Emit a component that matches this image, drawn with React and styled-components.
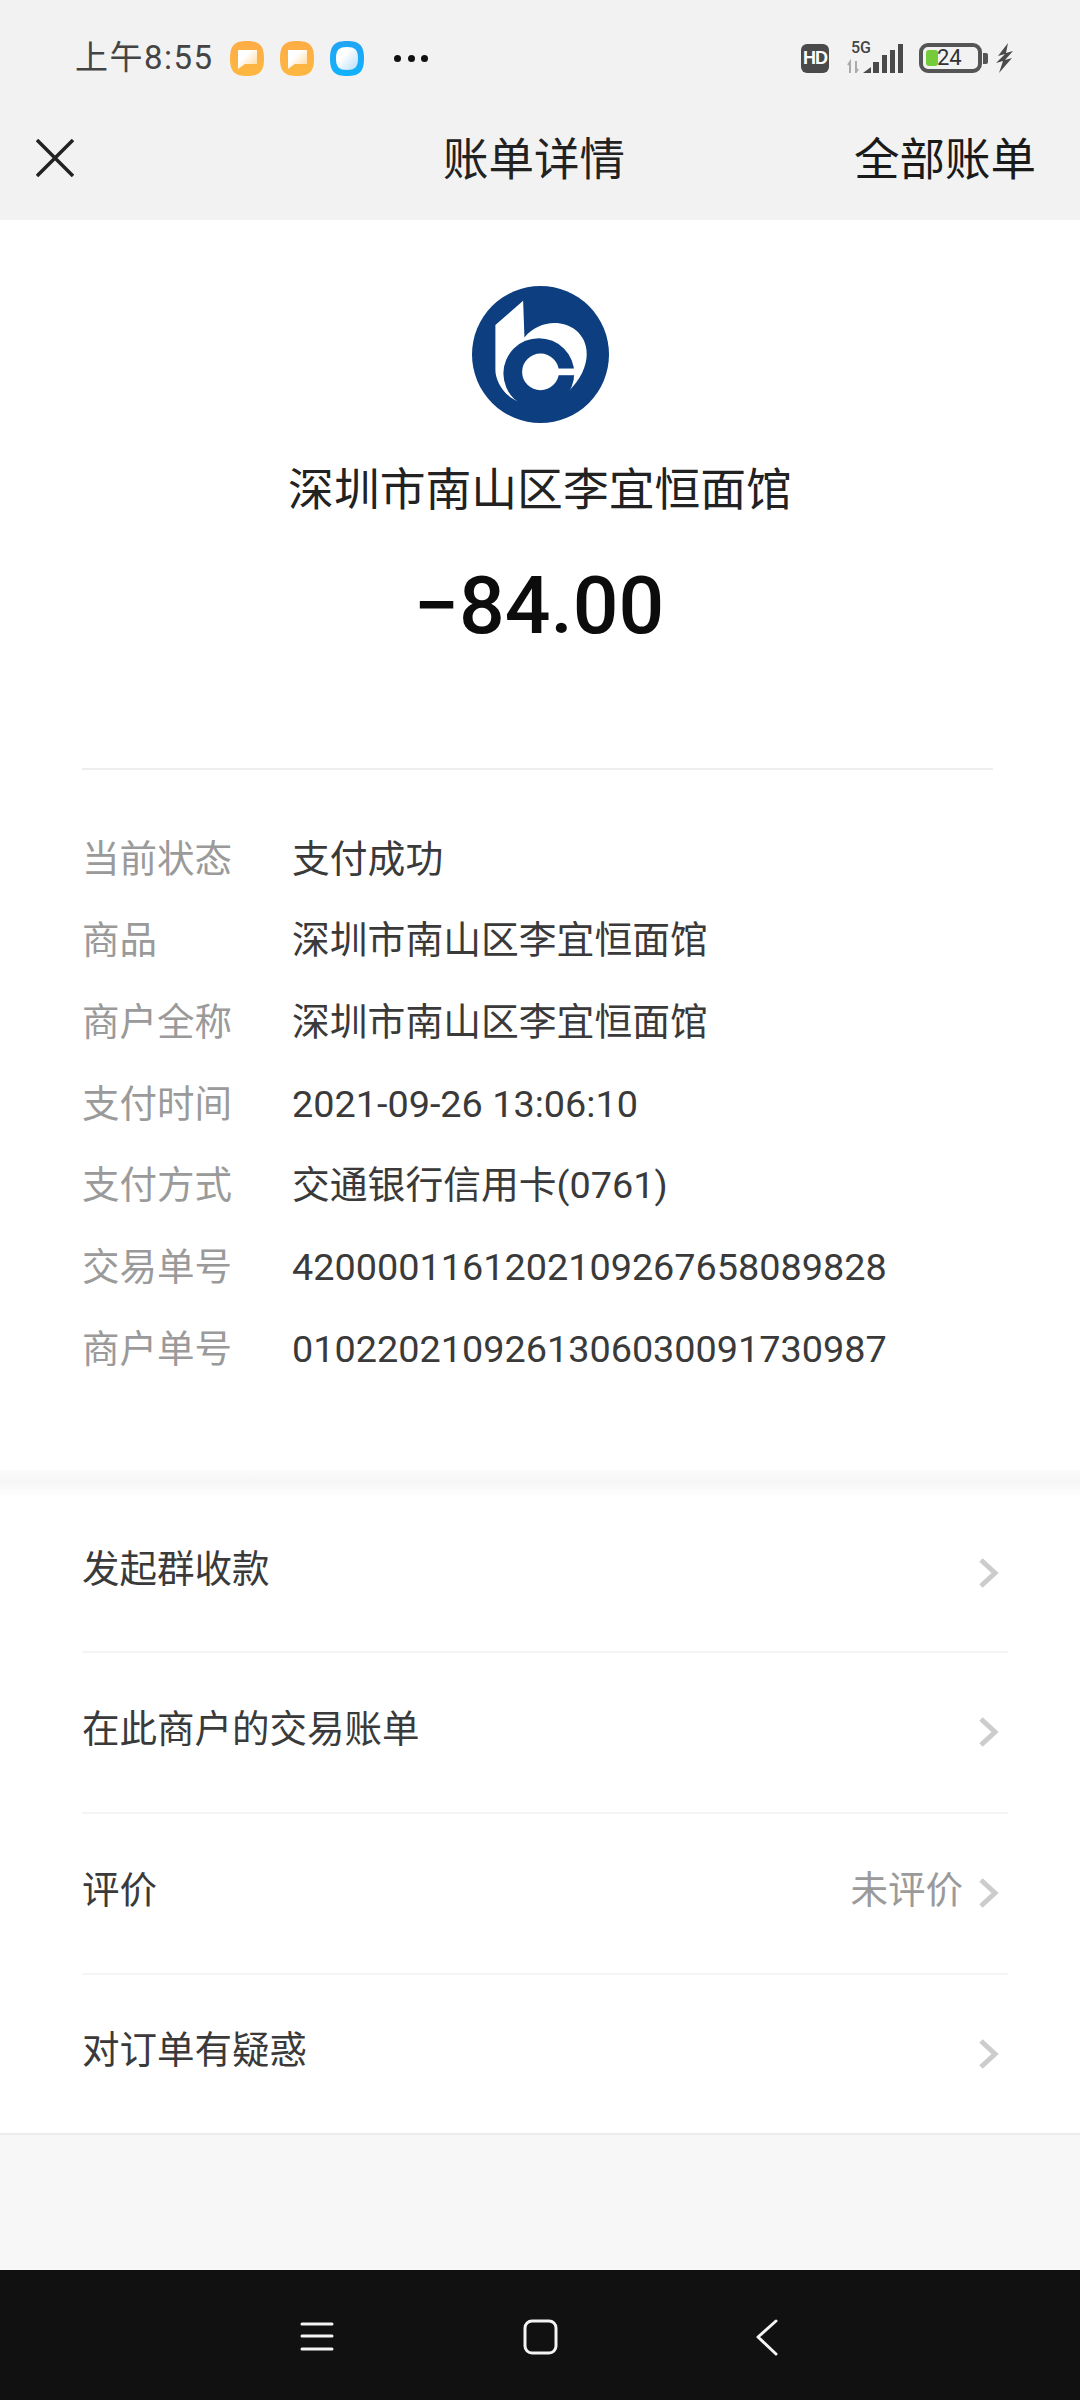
import React from 'react'
import styled, { createGlobalStyle } from 'styled-components';

const Global = createGlobalStyle`
    html, body {
        margin: 0;
        padding: 0;
        background: #ffffff;
    }
    * {
        box-sizing: border-box;
    }
    body {
        font-family: Roboto, "Noto Sans CJK SC", sans-serif;
    }
`;

const Page = styled.div`
    width: 1080px;
    height: 2400px;
    display: flex;
    flex-direction: column;
    overflow: hidden;
    background: #ffffff;
`;

const Header = styled.header`
    background: #f2f2f3;
    height: 220px;
`;

const StatusBar = styled.div`
    height: 116px;
    display: flex;
    align-items: center;
    padding: 0 67px 0 75px;
`;

const Time = styled.span`
    font-size: 33px;
    line-height: 36px;
    letter-spacing: 1.5px;
    color: #444444;
    width: 155px;
    white-space: nowrap;
`;

const NoticeRow = styled.div`
    display: flex;
    gap: 16px;
`;

const Dots = styled.div`
    display: flex;
    gap: 6.5px;
    margin-left: 30px;
`;

const Dot = styled.i`
    width: 7px;
    height: 7px;
    border-radius: 50%;
    background: #111111;
`;

const StatusRight = styled.div`
    margin-left: auto;
    display: flex;
    align-items: center;
`;

const HdBadge = styled.span`
    width: 28px;
    height: 29px;
    border-radius: 6px;
    background: #4a4a4a;
    color: #ffffff;
    font: 700 18px/29px "Liberation Sans", sans-serif;
    text-align: center;
    letter-spacing: -1px;
    margin-right: 18px;
`;

const Signal = styled.div`
    position: relative;
    width: 56px;
    height: 30px;
    margin-right: 16px;
`;

const FiveG = styled.span`
    position: absolute;
    left: 4px;
    top: -3px;
    font: 500 16px/16px Roboto, sans-serif;
    color: #444444;
`;

const Battery = styled.div`
    position: relative;
    width: 63px;
    height: 30px;
    border: 4px solid #555555;
    border-radius: 9px;
`;

const BatteryFill = styled.i`
    position: absolute;
    left: 3px;
    top: 3px;
    bottom: 3px;
    width: 12px;
    border-radius: 3px;
    background: #74cc3a;
`;

const BatteryText = styled.span`
    position: absolute;
    left: 14px;
    top: 0;
    font: 400 22px/22px Roboto, sans-serif;
    color: #333333;
`;

const BatteryCap = styled.i`
    width: 5px;
    height: 11px;
    margin: 0 8px 0 1px;
    border-radius: 0 2px 2px 0;
    background: #555555;
`;

const NavBar = styled.nav`
    height: 104px;
    display: flex;
    align-items: center;
    padding: 0 44px 15px 36px;
`;

const CloseIcon = styled.svg`
    width: 38px;
    height: 38px;
    margin-bottom: 6px;
`;

const NavTitle = styled.h1`
    margin: 0 0 0 369px;
    font-size: 45.5px;
    line-height: 60px;
    font-weight: 400;
    color: #222222;
    white-space: nowrap;
`;

const NavLink = styled.span`
    margin-left: auto;
    font-size: 45.5px;
    line-height: 60px;
    color: #1a1a1a;
    white-space: nowrap;
`;

const Hero = styled.section`
    padding-top: 66px;
    display: flex;
    flex-direction: column;
    align-items: center;
`;

const Merchant = styled.div`
    margin-top: 38px;
    font-size: 45.8px;
    line-height: 60px;
    color: #222222;
    white-space: nowrap;
`;

const Amount = styled.div`
    margin-top: 35px;
    margin-right: 2px;
    font-size: 80.5px;
    line-height: 100px;
    font-weight: 500;
    color: #0c0c0c;
`;

const HeroRule = styled.hr`
    width: 911px;
    height: 2px;
    margin: 112px 0 0 82px;
    border: 0;
    align-self: flex-start;
    background: #eeeeee;
`;

const Details = styled.dl`
    margin: 48px 0 0 0;
    padding-left: 82px;
    display: grid;
    grid-template-columns: 210px 1fr;
    grid-auto-rows: 81.67px;
    align-items: center;
`;

const Label = styled.dt`
    font-size: 37.5px;
    line-height: 50px;
    color: #9a9a9a;
    white-space: nowrap;
`;

const Value = styled.dd`
    margin: 0;
    font-size: 37.8px;
    line-height: 50px;
    color: #3a3a3a;
    white-space: nowrap;
`;

const Band = styled.div`
    height: 25px;
    margin-top: 80px;
    background: linear-gradient(#fbfbfb, #f6f6f6 45%, #fdfdfd);
`;

const Actions = styled.ul`
    margin: 0;
    padding: 0;
    list-style: none;
    border-bottom: 2px solid #ececec;
`;

const ActionRow = styled.li`
    height: 161px;
    margin-left: 82px;
    margin-right: 72px;
    padding: 0 9px 7px 0;
    display: flex;
    align-items: center;
    border-bottom: 2px solid #f4f4f4;
    font-size: 37.5px;
    line-height: 50px;
    color: #3a3a3a;

    &:first-child {
        height: 158px;
    }

    &:last-child {
        height: 158px;
        border-bottom: 0;
    }
`;

const ActionName = styled.span`
    flex: 1;
`;

const ActionNote = styled.span`
    color: #9a9a9a;
    margin-right: 16px;
`;

const Chevron = styled.svg`
    width: 20px;
    height: 30px;
    margin-top: 7px;
`;

const Filler = styled.div`
    flex: 1;
    background: #f7f7f7;
`;

const SystemBar = styled.div`
    height: 130px;
    background: #111111;
    display: grid;
    grid-template-columns: 223px 227px 40px;
    align-items: center;
    padding: 4px 0 0 297px;
`;

const SystemIcon = styled.svg`
    width: 40px;
    height: 40px;
    fill: none;
    stroke: #f4f4f4;
    stroke-width: 3;
    stroke-linecap: round;
    stroke-linejoin: round;
`;

const details = [
    ['当前状态', '支付成功'],
    ['商品', '深圳市南山区李宜恒面馆'],
    ['商户全称', '深圳市南山区李宜恒面馆'],
    ['支付时间', '2021-09-26 13:06:10'],
    ['支付方式', '交通银行信用卡(0761)'],
    ['交易单号', '4200001161202109267658089828'],
    ['商户单号', '0102202109261306030091730987'],
];

const actions = [
    { name: '发起群收款' },
    { name: '在此商户的交易账单' },
    { name: '评价', note: '未评价' },
    { name: '对订单有疑惑' },
];

const Notice = ({ id, from, to, inner, round }) => (
    <svg width="34" height="35" viewBox="0 0 34 35">
        <defs>
            <linearGradient id={id} x1="0" y1="0" x2="0" y2="1">
                <stop offset="0" stopColor={from} />
                <stop offset="1" stopColor={to} />
            </linearGradient>
            <linearGradient id={`${id}i`} x1="0" y1="0" x2="1" y2="1">
                <stop offset="0.35" stopColor="#ffffff" />
                <stop offset="1" stopColor={inner} />
            </linearGradient>
        </defs>
        <path d="M17 0 C29 0 34 4 34 17.5 C34 31 29 35 17 35 C5 35 0 31 0 17.5 C0 4 5 0 17 0 Z" fill={`url(#${id})`} />
        {round
            ? <path d="M17 6 C25 6 28 9 28 17.5 C28 26 25 29 17 29 C9 29 6 26 6 17.5 C6 9 9 6 17 6 Z" fill={`url(#${id}i)`} />
            : <path d="M8 9 H27 V23 H15 L8 28 Z" fill={`url(#${id}i)`} />}
    </svg>
);

const BankLogo = () => (
    <svg width="137" height="137" viewBox="95 78 410 410">
        <circle cx="300" cy="283" r="205" fill="#0c3e80" />
        <path d="M165 195 L248 122 L252 232 C290 185 360 175 405 210 C455 250 450 330 382 395 L300 400 L240 426 C190 410 165 360 165 330 Z" fill="#ffffff" />
        <circle cx="295" cy="340" r="106" fill="#0c3e80" />
        <circle cx="300" cy="335" r="55" fill="#ffffff" />
        <rect x="335" y="325" width="75" height="20" fill="#ffffff" />
    </svg>
);

const App = () => (
    <Page>
        <Global />
        <Header>
            <StatusBar>
                <Time>上午8:55</Time>
                <NoticeRow>
                    <Notice id="n1" from="#fdac45" to="#fdb840" inner="#fcd592" />
                    <Notice id="n2" from="#fdac45" to="#fdb840" inner="#fcd592" />
                    <Notice id="n3" from="#22a4f3" to="#12b2fc" inner="#b5def8" round />
                </NoticeRow>
                <Dots>
                    <Dot />
                    <Dot />
                    <Dot />
                </Dots>
                <StatusRight>
                    <HdBadge>HD</HdBadge>
                    <Signal>
                        <FiveG>5G</FiveG>
                        <svg width="56" height="30" viewBox="0 0 56 30">
                            <path d="M3 30 L3 19 L1 22 M9 18 L9 29 L11 26" stroke="#aaaaaa" strokeWidth="2" fill="none" />
                            <path d="M16 30 L24 24 V30 Z" fill="#4a4a4a" />
                            <rect x="26" y="19" width="6" height="11" fill="#4a4a4a" />
                            <rect x="35" y="12" width="5" height="18" fill="#4a4a4a" />
                            <rect x="43" y="7" width="5" height="23" fill="#4a4a4a" />
                            <rect x="51" y="1" width="5" height="29" fill="#4a4a4a" />
                        </svg>
                    </Signal>
                    <Battery>
                        <BatteryFill />
                        <BatteryText>24</BatteryText>
                    </Battery>
                    <BatteryCap />
                    <svg width="17" height="30" viewBox="0 0 17 30">
                        <path d="M12 0 L2 13 L9 11 L0 20 L7 18 L3 30 L16 15 L9 17 L17 8 L10 10 Z" fill="#4a4a4a" />
                    </svg>
                </StatusRight>
            </StatusBar>
            <NavBar>
                <CloseIcon viewBox="0 0 38 38">
                    <path d="M1 1 L37 37 M37 1 L1 37" stroke="#222222" strokeWidth="3.5" fill="none" />
                </CloseIcon>
                <NavTitle>账单详情</NavTitle>
                <NavLink>全部账单</NavLink>
            </NavBar>
        </Header>
        <Hero>
            <BankLogo />
            <Merchant>深圳市南山区李宜恒面馆</Merchant>
            <Amount>−84.00</Amount>
            <HeroRule />
        </Hero>
        <Details>
            {details.map(([label, value]) => (
                <React.Fragment key={label}>
                    <Label>{label}</Label>
                    <Value>{value}</Value>
                </React.Fragment>
            ))}
        </Details>
        <Band />
        <Actions>
            {actions.map(action => (
                <ActionRow key={action.name}>
                    <ActionName>{action.name}</ActionName>
                    {action.note && <ActionNote>{action.note}</ActionNote>}
                    <Chevron viewBox="0 0 20 30">
                        <path d="M2 2 L16 15 L2 28" stroke="#cccccc" strokeWidth="5" fill="none" />
                    </Chevron>
                </ActionRow>
            ))}
        </Actions>
        <Filler />
        <SystemBar>
            <SystemIcon viewBox="0 0 40 40">
                <path d="M5 7 H35 M5 19 H35 M5 32 H35" />
            </SystemIcon>
            <SystemIcon viewBox="0 0 40 40">
                <rect x="5" y="4" width="31" height="32" rx="7" />
            </SystemIcon>
            <SystemIcon viewBox="0 0 40 40">
                <path d="M29 4 L11 20 L29 37" />
            </SystemIcon>
        </SystemBar>
    </Page>
)

export default App;
